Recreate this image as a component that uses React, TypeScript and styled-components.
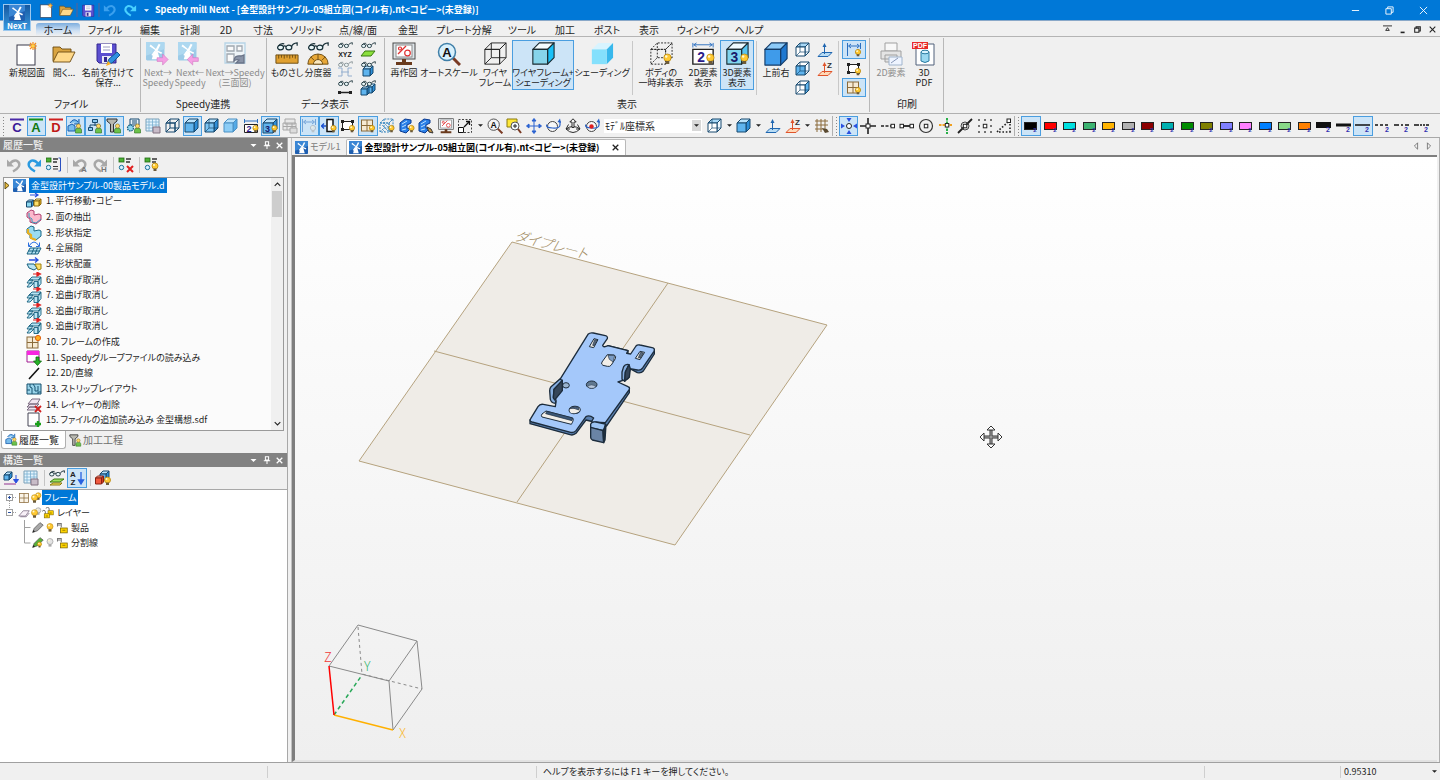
import React, { ReactNode } from "react";
import styled, { createGlobalStyle, css } from "styled-components";

const UI_FONT = `"Noto Sans CJK JP", "Noto Sans", sans-serif`;

const GlobalStyle = createGlobalStyle`
  * { box-sizing: border-box; }
  html, body { margin: 0; padding: 0; }
  body {
    background: #f0f0f0;
    color: #1e1e1e;
    font-family: ${UI_FONT};
    font-size: 10px;
    line-height: 12px;
    font-feature-settings: "palt";
    overflow: hidden;
  }
  button, select, input { font: inherit; color: inherit; font-feature-settings: inherit; }
`;

/* ---------- drawing helpers ---------- */

const NAVY = "#17496e";

type CubeProps = { x?: number; y?: number; w?: number; d?: number; top?: string; front?: string; side?: string; line?: string; dash?: string; wire?: boolean; inner?: boolean; sw?: number };

const Cube = ({ x = 1, y = 1, w = 9, d = 4, top = "#b9e2fb", front = "#5fb4ee", side = "#2f8fd8", line = NAVY, dash, wire, inner, sw = 1 }: CubeProps) => {
  const fy = y + d;
  return (
    <g stroke={line} strokeWidth={sw} strokeDasharray={dash} strokeLinejoin="round" fill="none">
      <path fill={wire ? "none" : top} d={`M${x} ${fy}l${d} ${-d}h${w}l${-d} ${d}z`} />
      <path fill={wire ? "none" : side} d={`M${x + w} ${fy}l${d} ${-d}v${w}l${-d} ${d}z`} />
      <path fill={wire ? "none" : front} d={`M${x} ${fy}h${w}v${w}h${-w}z`} />
      {(wire || inner) && <path strokeWidth={inner ? 0.7 : sw} d={`M${x} ${fy + w}l${d} ${-d}h${w}M${x + d} ${y}v${w}`} />}
    </g>
  );
};

const Bulb = ({ x, y, r = 3, off }: { x: number; y: number; r?: number; off?: boolean }) => (
  <g>
    <circle cx={x} cy={y} r={r} fill={off ? "#e4e4e4" : "#ffc933"} stroke={off ? "#909090" : "#b8860b"} strokeWidth="0.8" />
    <circle cx={x - r / 3} cy={y - r / 3} r={r / 3} fill="#fff8d0" />
    <rect x={x - r / 2} y={y + r - 0.4} width={r} height={r * 0.8} fill={off ? "#aaa" : "#6b5a3a"} />
  </g>
);

const Person = ({ x, y }: { x: number; y: number }) => (
  <g stroke="#2c6e1c" strokeWidth="0.6">
    <path d={`M${x - 3} ${y + 6}v-3q0-2 3-2t3 2v3z`} fill="#6cc24a" />
    <circle cx={x} cy={y - 1} r="2.1" fill="#ffd966" stroke="#8a6a1c" />
  </g>
);

const Glasses = ({ x = 0, y = 0, s = 1, c = "#183038" }: { x?: number; y?: number; s?: number; c?: string }) => (
  <g transform={`translate(${x} ${y}) scale(${s})`} fill="#e8f6f8" stroke={c} strokeWidth="1.3">
    <ellipse cx="4" cy="6" rx="3.2" ry="2.6" />
    <ellipse cx="13" cy="6" rx="3.2" ry="2.6" />
    <path fill="none" d="M7 5q1.5-1.5 3 0M1.5 4.5Q4 1 8 2M16 5Q17 1.5 22 1v3" />
  </g>
);

const Mill = ({ fade }: { fade?: boolean }) => (
  <g>
    <rect width="16" height="16" rx="1" fill={fade ? "#9ccbe8" : "#1f5fb0"} />
    <path d="M0 0h16v6L0 12z" fill={fade ? "#aed8f0" : "#3a86d4"} />
    <path d="M7 8h3l2 7H5z" fill="#fff" />
    <path d="M8 7L3 3.6l1-1.4L8.6 6 11 1.5l1.6.8-2.6 5L14 9l-.8 1.5L8.4 8 6 12l-1.4-.8z" fill="#fff" />
  </g>
);

const Doc = ({ x = 2, y = 2, w = 14, h = 20 }: { x?: number; y?: number; w?: number; h?: number }) => (
  <g>
    <rect x={x} y={y} width={w} height={h} fill="#fff" stroke="#3a3a4a" />
    <path d={`M${x + w - 2} ${y - 3}v8M${x + w - 6} ${y + 1}h8M${x + w - 5} ${y - 2}l6 6M${x + w + 1} ${y - 2}l-6 6`} stroke="#f58a1c" strokeWidth="1.2" />
    <circle cx={x + w - 2} cy={y + 1} r="1.8" fill="#ffd24a" />
  </g>
);

const Folder = () => (
  <g stroke="#6b4a10" strokeWidth="0.9" strokeLinejoin="round">
    <path fill="#d9a441" d="M1 19V5h7l2 2h9v4" />
    <path fill="#ffd98a" d="M1 20l5-10h17l-5 10z" />
  </g>
);

const Disk = () => (
  <g>
    <path d="M1 2h19v19H3l-2-2z" fill="#5b4fd0" stroke="#35298f" />
    <rect x="5" y="2" width="11" height="9" fill="#fff" />
    <path d="M7 5h7M7 8h7" stroke="#9a9ac0" />
    <rect x="6" y="14" width="9" height="7" fill="#e8e8f4" />
    <rect x="8" y="15" width="3" height="5" fill="#35298f" />
  </g>
);

const Curl = ({ c, flip }: { c: string; flip?: boolean }) => (
  <g transform={flip ? "translate(16 0) scale(-1 1)" : undefined}>
    <path d="M4 6.500Q7 2.800 10.500 3.600Q14.500 5.500 12.800 9.500Q11.500 12 7 14.500" fill="none" stroke={c} strokeWidth="2.400" />
    <path d="M1 2.500v7h7z" fill={c} />
  </g>
);

const Monitor = () => (
  <g>
    <rect x="1" y="1" width="22" height="16" fill="#dfe6ea" stroke="#4a4a4a" />
    <rect x="4" y="3" width="16" height="12" fill="#fff" stroke="#888" />
    <g stroke="#e03030" fill="none" strokeWidth="1.200">
      <path d="M6 12L14 4" /><circle cx="8" cy="6.500" r="1.500" /><circle cx="15.500" cy="11" r="2.800" />
    </g>
    <path d="M10 17h4v3h6v3H4v-3h6z" fill="#6a3a1c" />
  </g>
);

const Lens = ({ plain }: { plain?: boolean }) => (
  <g>
    <path d="M16 16l7 7" stroke="#7a3a24" strokeWidth="3" />
    <circle cx="10" cy="10" r="8.500" fill={plain ? "#f4f4f4" : "#d8f0fc"} stroke={plain ? "#555" : "#3f7fa8"} strokeWidth="1.500" />
    <text x="10" y="14.500" textAnchor="middle" fontSize="13" fontWeight="700" fill="#111" fontFamily="Liberation Sans, sans-serif">A</text>
  </g>
);

const Arrow = ({ c, flip }: { c: string; flip?: boolean }) => (
  <path transform={flip ? "translate(34 0) scale(-1 1)" : undefined} d="M12 17h6v-4l6 6-6 6v-4h-6z" fill={c} stroke="#d070c0" strokeWidth="0.600" />
);

const Glyph = ({ t, c, x = 8, y = 13, s = 12 }: { t: string; c: string; x?: number; y?: number; s?: number }) => (
  <text x={x} y={y} fontSize={s} fontWeight="700" textAnchor="middle" fill={c} fontFamily="Liberation Sans, sans-serif">{t}</text>
);

const Grid = ({ x = 2, y = 2, s = 10, c = "#8a6a3a", f = "#f6ead4" }: { x?: number; y?: number; s?: number; c?: string; f?: string }) => (
  <g stroke={c} fill="none">
    <rect x={x} y={y} width={s} height={s} fill={f} />
    <path d={`M${x + s / 2} ${y}v${s}M${x} ${y + s / 2}h${s}`} />
  </g>
);

const Axes = ({ c, z }: { c: string; z?: boolean }) => (
  <g>
    <path d="M1 14.500l4-4h10l-4 4z" fill={z ? "#ffd9b8" : "#b8dcf4"} stroke={c} />
    <path d="M7.500 12V4" stroke={c} />
    <path d="M5.500 5l2-4 2 4z" fill={c} />
    {z && <Glyph t="Z" c="#333" x={12.5} y={7} s={8} />}
  </g>
);

const Dim = ({ c = "#2a6fc0" }: { c?: string }) => (
  <path d="M1.500 1v13M14.500 1v6M3 4h10M5 2L2.500 4 5 6M11 2l2.500 2L11 6" stroke={c} fill="none" />
);

const Nodes = () => (
  <g stroke="#222" fill="#fff"><rect x="2.500" y="3.500" width="10" height="8" />
    {[[2, 3], [12, 3], [2, 11], [12, 11]].map(([a, b]) => <rect key={`${a}-${b}`} x={a - 1} y={b - 1} width="3" height="3" fill="#222" stroke="none" />)}
  </g>
);

const Sq = ({ x, y }: { x: number; y: number }) => <rect x={x - 1.5} y={y - 1.5} width="3.500" height="3.500" fill="#fff" stroke="#222" />;

const Orbit = ({ dot }: { dot?: boolean }) => (
  <g fill="none">
    <circle cx="7.500" cy="8.500" r="5" stroke="#444" fill="#f8f8f8" />
    <path d="M2 6.500q-2 3 5.500 3.500T15 7V3" stroke="#2a62c8" strokeWidth="1.200" />
    <path d="M12.500 4L15 .5l1 4.500z" fill="#2a62c8" />
    {dot && <circle cx="7.500" cy="8.500" r="2.200" fill="#e02020" />}
  </g>
);

const Bars = ({ x = 1, y = 1 }: { x?: number; y?: number }) => (
  <g><rect x={x} y={y} width="5" height="4" fill="#4cb034" stroke="#1f6a12" strokeWidth="0.800" />
    <circle cx={x + 2.5} cy={y + 9.5} r="2.200" fill="#d8f0ff" stroke="#17709a" />
    <path d={`M${x + 7} ${y + 1}h5M${x + 7} ${y + 4}h4`} stroke="#333" strokeWidth="1.300" /></g>
);

const Plates = ({ x = 0, y = 0, c = "#b8e4f4" }: { x?: number; y?: number; c?: string }) => (
  <g transform={`translate(${x} ${y})`} stroke="#17607e" fill={c} strokeWidth="0.900" strokeLinejoin="round">
    <path d="M3 6l3-3h9l-3 3zM1 9l2-3h4l-2 3zM1 13l3-4h4l-4 4zM8 7.500h4v6H8zM12 7.500l3-4v6l-3 4z" />
  </g>
);

const Lock = ({ x, y }: { x: number; y: number }) => (
  <g><path d={`M${x + 1.5} ${y}v-2.500q0-2-2-2t-2 1.500`} fill="none" stroke="#666" strokeWidth="1.200" />
    <rect x={x} y={y} width="7" height="5.500" fill="#ffd400" stroke="#7a6400" strokeWidth="0.800" /><path d={`M${x + 2} ${y + 3}h3`} stroke="#7a6400" /></g>
);

const Pencil = ({ c }: { c: string }) => (
  <g><path d="M2 14l2-5 7-7 4 3-7 7z" fill={c} stroke="#555" strokeWidth="0.900" /><path d="M2 14l1-3 2 2z" fill="#222" /></g>
);

const Zview = () => (
  <g fill="#f4f4f4" stroke="#2a2a2a" strokeWidth="1">
    <path d="M1 11q7-5 14 0q-7 7-14 0z" />
    <path d="M8 .8L4.800 4H7v5.500h2V4h2.200z" />
    <path d="M3.500 6.500L1 11h4M12.500 6.500L15 11h-4" fill="none" />
  </g>
);

/* [view box size, drawing] */
const icons: Record<string, [number, ReactNode]> = {
  newDoc: [24, <><Doc x={2} y={3} w={18} h={20} /></>],
  folder: [24, <Folder />],
  disk: [22, <Disk />],
  saveAs: [24, <><Disk /><path d="M11 22l2-5 8-7 3 3-8 8z" fill="#2f8fe0" stroke="#155a94" /><path d="M10 24l2-5 3 3z" fill="#ffb020" /></>],
  undoT: [16, <Curl c="#3aa0ee" />],
  redoT: [16, <Curl c="#49d1ff" flip />],
  mill: [16, <Mill />],
  nextTo: [26, <><g transform="scale(1.250)"><Mill fade /></g><Arrow c="#f4a0e4" /></>],
  nextFrom: [26, <><g transform="scale(1.250)"><Mill fade /></g><Arrow c="#f4a0e4" flip /></>],
  threeView: [24, <g stroke="#a0a8b0" fill="#fafafa" strokeWidth="1.300"><path d="M2 1h20v20H2z" stroke="#b6d4e6" fill="#eef4f8" /><path d="M4 4h7v5H4zM4 12h7v8H4zM14 4h5v5h-5z" /><path d="M11 19q0-6 7-5l3-1v8h-8l3-3q-3-1-5 1z" fill="#8a94a8" stroke="#6a7488" /></g>],
  ruler: [26, <><Glasses x={2} /><path d="M1 14h24v9H1z" fill="#e0a030" stroke="#6a4a10" /><path d="M4 14v4M7 14v3M10 14v4M13 14v3M16 14v4M19 14v3M22 14v4" stroke="#6a4a10" /></>],
  protractor: [26, <><Glasses x={2} /><path d="M2 24a11 11 0 0 1 22 0z" fill="#e8a838" stroke="#6a4a10" /><path d="M8 24a5 5 0 0 1 10 0zM13 13v6M5 16l4 4M21 16l-4 4" fill="#fbe8c0" stroke="#6a4a10" /></>],
  gXyz: [16, <><Glasses x={1} s={0.65} /><Glyph t="XYZ" c="#222" y={15} s={7} /></>],
  gPlane: [16, <><Glasses x={1} s={0.65} /><path d="M1 14l4-5h10l-4 5z" fill="#8ce03c" stroke="#3a7a12" /></>],
  gDim: [16, <g opacity="0.500"><Glasses x={1} s={0.65} /><path d="M1 7h4v8H1M15 7h-4v8h4M4 11h8" stroke="#3a70b0" fill="none" /></g>],
  gCube: [16, <><Cube x={3} y={5} w={7} d={3} /><Glasses x={1} s={0.65} /></>],
  gLine: [16, <><Glasses x={1} s={0.65} /><path d="M2 12.500h12" stroke="#222" strokeWidth="1.500" /><path d="M1 11h3v3H1zM12 11h3v3h-3z" fill="#222" /></>],
  gCubes: [16, <><Cube x={6} y={4} w={6} d={3} /><Cube x={1} y={7} w={6} d={2} /><Glasses x={1} s={0.65} /></>],
  monitor: [24, <Monitor />],
  lens: [24, <Lens />],
  wireB: [26, <Cube wire x={2} y={1} w={16} d={7} line="#222" />],
  shadeB: [26, <Cube x={2} y={1} w={16} d={7} line="#1a2a30" top="#f4fcff" front="#86d4ea" side="#18c0f8" sw={1.2} />],
  shade: [26, <Cube x={2} y={1} w={16} d={7} line="none" top="#d8f4ff" front="#84e0fc" side="#38b8ec" />],
  hideBody: [26, <><Cube wire x={2} y={1} w={16} d={7} line="#222" dash="2 1.500" /><Bulb x={20} y={17} r={4} /></>],
  two: [26, <><path d="M2 1v5M24 1v5M3 3h20M6 1L3 3l3 2M20 1l3 2-3 2" stroke="#2a6fc0" fill="none" /><path d="M2 8h22v16H2z" fill="#fff" stroke="#222" strokeWidth="1.500" /><Glyph t="2" c="#2a1a8a" x={11} y={22} s={15} /><Bulb x={21} y={17} r={4} /></>],
  three: [26, <><Cube x={2} y={1} w={16} d={7} line="#1a2a30" top="#eefaff" front="#7fd4ee" side="#58c4f0" sw={1.2} /><Glyph t="3" c="#1a1a6a" x={10} y={22} s={15} /><Bulb x={21} y={17} r={4} /></>],
  cubeBig: [26, <Cube x={1} y={1} w={17} d={7} line="#123a66" top="#8ccaf8" front="#3f9bea" side="#1f78d0" sw={1.2} />],
  v1: [16, <Cube inner x={1} y={1} w={9} d={4} top="#a8d8f6" front="#fff" side="#eef8ff" />],
  v2: [16, <Cube inner x={1} y={1} w={9} d={4} top="#fff" front="#5fb4ee" side="#eef8ff" />],
  v3: [16, <Cube inner x={1} y={1} w={9} d={4} top="#fff" front="#fff" side="#5fb4ee" />],
  wire: [16, <Cube wire x={1} y={1} w={9} d={4} />],
  cube: [16, <Cube x={1} y={1} w={9} d={4} />],
  cubeWire: [16, <Cube inner x={1} y={1} w={9} d={4} front="#7cc4f2" />],
  cubePlain: [16, <Cube x={1} y={1} w={9} d={4} line="#4a90c4" front="#8ccdf6" side="#54aae6" />],
  axes: [16, <Axes c="#1f66b0" />],
  axesZ: [16, <Axes c="#e0542a" z />],
  dimBulb: [16, <><Dim /><Bulb x={12} y={10} r={2.6} /></>],
  dimOff: [16, <g opacity="0.550"><Dim /><Bulb x={12} y={10} r={2.6} off /></g>],
  nodesBulb: [16, <><Nodes /><Bulb x={12} y={10} r={2.6} /></>],
  gridBulb: [16, <><Grid x={1.5} y={2} s={11} /><Bulb x={12} y={10} r={2.6} /></>],
  printer: [24, <><g stroke="#a0a0a0" fill="#e4e4e4"><path d="M6 1h12v8H6z" fill="#f8f8f8" /><path d="M2 9h20v8H2zM6 13h12v7H6z" /></g><path d="M10 15h13v8H10z" fill="#eef4ff" stroke="#a0b4cc" /><path d="M12 21l7-5" stroke="#8898b8" /></>],
  pdf: [24, <><path d="M4 2h18v21H4z" fill="#fff" stroke="#50607a" /><path d="M0 0h16v7H0z" fill="#e82a2a" /><Glyph t="PDF" c="#fff" x={8} y={6} s={7} /><path d="M9 10v9q4 3 8 0v-9z" fill="#9ad8f0" stroke="#2a7aa0" /><ellipse cx="13" cy="10" rx="4" ry="1.800" fill="#d8f4ff" stroke="#2a7aa0" /></>],
  C: [16, <><path d="M1 1.500h14" stroke="#4a2aa8" strokeWidth="2" /><Glyph t="C" c="#3a1a98" y={14} s={13} /></>],
  A: [16, <><path d="M1 1.500h14" stroke="#189018" strokeWidth="2" /><Glyph t="A" c="#107a10" y={14} s={13} /></>],
  D: [16, <><path d="M1 1.500h14" stroke="#d02020" strokeWidth="2" /><Glyph t="D" c="#c01818" y={14} s={13} /></>],
  history: [16, <><path d="M1 13V8l4-2 3 2v5zM3 5q4-6 8-1M12 1v5H7" fill="#78bcec" stroke="#1a5fae" /><Person x={11.5} y={9} /></>],
  treeP: [16, <><g stroke={NAVY} fill="#8cc8f0"><path d="M5.500 1.500h5v3h-5zM1.500 9.500h4v3h-4z" /><path d="M8 5v3M3 9V7h10v2" fill="none" /></g><Person x={11.5} y={9} /></>],
  funnelP: [16, <><path d="M1 1h10v2L7.500 6v8h-3V6L1 3z" fill="#b8b8b0" stroke="#333" /><Person x={11.5} y={9} /></>],
  gearP: [16, <><path d="M4 1h9v6H4z" fill="#e8f4fc" stroke={NAVY} /><path d="M6 3h5M6 5h5" stroke={NAVY} /><circle cx="4.500" cy="10" r="3" fill="#8cd4ee" stroke="#1a6080" strokeWidth="1.300" strokeDasharray="1.500 .8" /><Person x={11.5} y={9} /></>],
  sheet: [16, <><path d="M1 1h13v12H1z" fill="#e4f4fd" stroke="#7aa0b8" /><path d="M1 4h13M1 7h13M1 10h13M4 1v12M7.500 1v12M11 1v12" stroke="#7ab0d0" strokeWidth="0.800" /><path d="M8 9h7v6H8z" fill="#c8bcc8" stroke="#807080" /></>],
  two16: [16, <><path d="M1.500 1v4M14.500 1v4M2 3h12" stroke="#2a6fc0" /><path d="M1.500 6.500h13v8h-13z" fill="#fff" stroke="#222" /><Glyph t="2" c="#2a1a8a" x={6} y={14} s={9} /><Bulb x={12.5} y={10} r={2.6} /></>],
  three16: [16, <><Cube x={1} y={1} w={10} d={4} line={NAVY} /><Glyph t="3" c="#1a1a6a" x={5.5} y={14} s={9} /><Bulb x={12.5} y={10} r={2.6} /></>],
  copyGray: [16, <g stroke="#a8a8a8" fill="#e8e8e8"><path d="M3 1h10v5H3zM1 5h13v7H1zM5 5v7M10 5v7M1 8.500h13" /><path d="M8 10h7v5H8z" fill="#ddd" /></g>],
  slide: [16, <><path d="M6 1.500h6v12H6z" fill="#fff" stroke="#111" strokeWidth="1.500" /><path d="M5 8H1M3 5.500L.5 8 3 10.500" stroke="#1a50d0" fill="none" strokeWidth="1.300" /><Bulb x={12.5} y={10} r={2.6} /></>],
  ghostBulb: [16, <><Cube wire x={1} y={1} w={9} d={4} line="#3a88c0" dash="2 1" /><path d="M3 7l6 6M3 11l3 3M6 6l4 4" stroke="#3a88c0" strokeWidth="0.700" /><Bulb x={12.5} y={10} r={2.6} /></>],
  blueBulb: [16, <><path d="M1 5l5-4 6 1v3l-4 2v3l3 1-4 4-6-2z" fill="#2a80e8" stroke="#0a3a90" /><path d="M3 6l5-3M3 9l4-2M3 12l4-1" stroke="#bce0ff" /><Bulb x={12.5} y={10} r={2.6} /></>],
  bluePen: [16, <><path d="M1 5l5-4 6 1v3l-4 2v3l3 1-4 4-6-2z" fill="#2a80e8" stroke="#0a3a90" /><path d="M3 6l5-3M3 9l4-2M3 12l4-1" stroke="#bce0ff" /><path d="M9 9l4 2 2 4-4-1z" fill="#c89a4a" stroke="#333" /></>],
  expand: [16, <><path d="M1.500 1.500h13v13h-13z" fill="none" stroke="#444" strokeDasharray="2 1.500" /><path d="M1.500 9.500h5v5h-5z" fill="#fff" stroke="#111" /><path d="M7 9l5-5M9 3.500h3.500V7" stroke="#111" fill="none" strokeWidth="1.300" /></>],
  lens16: [24, <Lens plain />],
  lensPlus: [16, <><path d="M1 1h10v8H1z" fill="#ffe838" stroke="#8a7a10" /><circle cx="9" cy="8" r="4" fill="#f4faff" stroke="#555" /><path d="M7 8h4M9 6v4" stroke="#222" /><path d="M12 11l3 4" stroke="#7a3a24" strokeWidth="2" /></>],
  move: [16, <g fill="#2a62d0" stroke="#2a62d0"><path d="M8 3v10M3 8h10" /><path d="M8 .5L10 3H6zM8 15.500L10 13H6zM.5 8L3 6v4zM15.500 8L13 6v4z" /></g>],
  orbit: [16, <Orbit />],
  orbitDot: [16, <Orbit dot />],
  zview: [16, <Zview />],
  gridPen: [16, <><path d="M3 1v13M7 1v13M11 1v10M1 3h13M1 7h13M1 11h8" stroke="#8a6a3a" fill="none" /><path d="M8 10l5 1 2 3-4 1z" fill="#5a4a30" /></>],
  sCenter: [16, <g fill="#2a50e0"><circle cx="8" cy="8" r="2.500" fill="#fff" stroke="#222" /><path d="M0 5.500l4 2.500-4 2.500zM16 5.500l-4 2.500 4 2.500zM5.500 0h5L8 4zM5.500 16h5L8 12z" /></g>],
  sCross: [16, <><path d="M8 0v16M0 8h16" stroke="#222" strokeWidth="1.600" /><rect x="6" y="6" width="4" height="4" fill="#fff" stroke="#222" /></>],
  sEnd: [16, <><path d="M1 8h10" stroke="#222" strokeWidth="1.600" strokeDasharray="3 1.500" /><Sq x={12.5} y={7.8} /></>],
  sMid: [16, <><path d="M3 8h11" stroke="#222" strokeWidth="1.800" /><Sq x={2.5} y={7.8} /><Sq x={12.5} y={7.8} /></>],
  sCircle: [16, <><circle cx="8" cy="8" r="6.500" fill="none" stroke="#333" strokeWidth="1.200" /><Sq x={7.8} y={7.8} /></>],
  sPerp: [16, <><path d="M1 7h14" stroke="#f0a020" strokeWidth="2" strokeDasharray="2.500 1" /><path d="M9 0v16" stroke="#28b048" strokeWidth="2" strokeDasharray="2.500 1" /><Sq x={8.8} y={7} /></>],
  sNear: [16, <><path d="M1 15L15 1" stroke="#222" strokeWidth="1.800" /><circle cx="8" cy="8" r="4" fill="none" stroke="#444" /><Sq x={7.8} y={7.8} /></>],
  sGrid: [16, <><path d="M1.200 2h14M1.200 14h14" stroke="#222" strokeWidth="1.600" strokeDasharray="1.600 4.400" /><path d="M2 7.200v1.600M14 7.200v1.600" stroke="#222" strokeWidth="1.600" /><Sq x={7.8} y={7.8} /></>],
  sAngle: [16, <><path d="M1 14L12 4M3 14h12M14 6v8" stroke="#222" strokeWidth="1.600" strokeDasharray="1.600 1.800" fill="none" /><Sq x={12.5} y={2.5} /></>],
  undo: [16, <Curl c="#a8a8a8" />],
  redo: [16, <Curl c="#2a9ae0" flip />],
  undoA: [16, <><Curl c="#a8a8a8" /><Glyph t="A" c="#777" x={12} y={15} s={8} /></>],
  undoH: [16, <><Curl c="#a8a8a8" flip /><Glyph t="H" c="#777" x={12} y={15} s={8} /></>],
  group: [16, <><Bars x={0} /><path d="M7 9.500h5M7 12h5" stroke="#333" /><path d="M12.500 1h2v13h-2" stroke="#2a50c0" fill="none" /></>],
  barsX: [16, <><Bars /><path d="M9 9l6 6M15 9l-6 6" stroke="#e02020" strokeWidth="2" /></>],
  barsBulb: [16, <><Bars /><Bulb x={11} y={9} /></>],
  h1: [16, <><Cube x={0.5} y={7} w={5} d={2} front="#8cd8f0" /><Cube x={8} y={6} w={5} d={2} front="#ffe06a" top="#fff4b8" side="#e8b020" line="#8a6a10" /><path d="M4 2h7M9 0l3 2-3 2" stroke="#2a50e0" fill="none" strokeWidth="1.200" /></>],
  h2: [16, <><path d="M1 4l4-3 3 1v4l5-1 2 1v5l-5 4-6-2v-3L1 8z" fill="#fbb8cc" stroke="#b04070" /><path d="M3 4v4l3 2v3l4 1 5-4" fill="none" stroke="#3a98b8" /></>],
  h3: [16, <><path d="M1 4l4-3 3 1v4l5-1 2 1v5l-5 4-6-2v-3L1 8z" fill="#9adcf2" stroke="#1a6888" /><path d="M2 4v4l3 2v3l5 2" fill="none" stroke="#e8b020" strokeWidth="2.200" /></>],
  h4: [16, <><path d="M1 14l3-6h11l-3 6zM2.500 11h11M8 8l-2.500 6M11.500 8L9 14" stroke="#17607e" fill="#b8e4f4" /><path d="M3 6q5-8 10 0M13.500 2.500V6.500H10M2.500 2.500V6.500H6" fill="none" stroke="#2a70e0" /></>],
  h5: [16, <><path d="M1 8h7l3 4-3 2-5-2z" fill="#b8e4f4" stroke="#17607e" /><path d="M9 8h6v5l-3 1z" fill="#ffe06a" stroke="#a08010" /><path d="M3 4h8M9 1.500L12 4 9 6.500" stroke="#2a50e0" fill="none" strokeWidth="1.300" /></>],
  h6: [16, <><Plates y={2} /><path d="M7 2h6M11 .2L14.500 2 11 4z" stroke="#e02020" fill="#e02020" strokeWidth="1.200" /></>],
  h10: [16, <><Grid x={1} y={3} s={11} /><circle cx="12" cy="4" r="2.600" fill="#ffb020" stroke="#e06010" /></>],
  h11: [16, <><path d="M1 1h12v11H1z" fill="#fff" stroke="#a01a90" /><path d="M1 1h12v4H1z" fill="#f828e0" /><path d="M10 7h3v4h2.500l-4 4.500-4-4.500H10z" fill="#28b028" stroke="#0a6a0a" strokeWidth="0.800" /></>],
  h12: [16, <path d="M3 14L13 3" stroke="#111" strokeWidth="1.600" />],
  h13: [16, <><path d="M1 3h14v10H1z" fill="#9ad4ea" stroke="#17506e" /><path d="M4 3v3l2 1v6M7 3l2 3v4h3V5M1 9h3M12 13v-2h3" fill="none" stroke="#17506e" /></>],
  h14: [16, <><g fill="#f0e4f0" stroke="#7a6a80"><path d="M1 13l3-3h9l-3 3zM1 10l3-3h9l-3 3zM2 7l4-5h8l-3 5z" /></g><path d="M9 9l6 6M15 9l-6 6" stroke="#d02020" strokeWidth="1.800" /></>],
  h15: [16, <><path d="M2 1h11v13H2z" fill="#fff" stroke="#445" /><path d="M12 9v6M9 12h6" stroke="#1aa01a" strokeWidth="2.400" /></>],
  sortDown: [16, <><Cube x={1} y={2} w={5} d={3} /><path d="M1 14h12" stroke="#b070b0" strokeWidth="1.500" /><path d="M13 5v7M10.500 9.500L13 13l2.500-3.500z" stroke="#2a50e0" fill="#2a50e0" /></>],
  glassPlane: [16, <><path d="M1 12l4-3h10l-4 3z" fill="#9ce05c" stroke="#3a7a12" /><path d="M1 15l3-2h9l-2 2z" fill="#ffe86a" stroke="#8a7a10" /><Glasses s={0.7} /></>],
  az: [16, <><Glyph t="A" c="#222" x={4} y={7} s={8} /><Glyph t="Z" c="#222" x={4} y={15} s={8} /><path d="M12 2v11M9.500 10L12 14l2.500-4z" stroke="#2a62e0" fill="#2a62e0" strokeWidth="1.300" /></>],
  cubesBulb: [16, <><Cube x={5} y={1} w={6} d={3} /><Cube x={0.5} y={6} w={6} d={2} top="#ffb0a0" front="#f05a40" side="#d03a20" line="#8a2010" /><Bulb x={12.5} y={10} /></>],
  frame: [16, <Grid x={2} y={2} s={12} f="#faf4e8" />],
  bulbs: [16, <><Bulb x={11} y={4.5} r={3.5} /><Bulb x={6} y={7.5} r={4} /></>],
  bulbsHalf: [16, <><Bulb x={11} y={4.5} r={3.5} off /><Bulb x={6} y={7.5} r={4} /></>],
  layer: [16, <path d="M1 12l6-7h8l-5 7zM3 13h8l4-5" fill="#f8f0f8" stroke="#7a6a80" />],
  locks: [16, <><Lock x={8} y={5} /><Lock x={3} y={9} /></>],
  lock: [16, <><rect x="6" y="8" width="9" height="6.500" fill="#ffd400" stroke="#7a6400" /><path d="M8.500 11h4" stroke="#7a6400" /><path d="M2 6V2h5v5M2 4h4" fill="none" stroke="#777" strokeWidth="1.400" /></>],
  bulb: [16, <Bulb x={8} y={6} r={4} />],
  bulbOff: [16, <Bulb x={8} y={6} r={4} off />],
  pencil: [16, <Pencil c="#a8a8a8" />],
  pencilG: [16, <><Pencil c="#58b038" /><Bulb x={10.5} y={10} r={2.5} /></>],
};

const Icon = ({ name, size = 16 }: { name: string; size?: number }) => {
  const [box, art] = icons[name];
  return <svg width={size} height={size} viewBox={`0 0 ${box} ${box}`} fill="none" aria-hidden="true">{art}</svg>;
};

/* ---------- shell ---------- */

const Window = styled.div`
  display: flex;
  flex-direction: column;
  height: 100vh;
  min-width: 0;
  position: relative;
`;

const bareButton = css`
  display: flex;
  align-items: center;
  justify-content: center;
  padding: 0;
  margin: 0;
  border: 0;
  background: transparent;
`;

const TitleBar = styled.header`
  display: flex;
  align-items: center;
  flex: 0 0 20px;
  padding-left: 36px;
  background: #0078d7;
  color: #fff;
`;

const AppButton = styled.button`
  ${bareButton}
  position: absolute;
  left: 3px;
  top: 4px;
  width: 28px;
  height: 27px;
  flex-direction: column;
  border: 1px solid #9cc8ee;
  background: linear-gradient(#1558a0, #3a9ae0);
  color: #fff;
  font-size: 8px;
  font-weight: 700;
  line-height: 9px;
`;

const QuickButton = styled.button<{ $w?: number }>`
  ${bareButton}
  width: ${p => p.$w ?? 20}px;
  height: 20px;
`;

const QuickDivider = styled.span`
  width: 2px;
  height: 14px;
  background: #2f6cb4;
`;

const AppTitle = styled.h1`
  flex: 1;
  margin: 0 0 0 3px;
  font-size: 9px;
  line-height: 16px;
  font-weight: 700;
  white-space: nowrap;
`;

const CaptionButton = styled.button`
  ${bareButton}
  width: 34px;
  height: 20px;
`;

const TabStrip = styled.nav`
  display: flex;
  flex: 0 0 17px;
  align-items: stretch;
  padding: 2px 0 0 36px;
  border-top: 1px solid #8aa8c8;
  border-bottom: 1px solid #b4b4b4;
`;

const RibbonTab = styled.button<{ $w: number; $on?: boolean }>`
  ${bareButton}
  width: ${p => p.$w}px;
  white-space: nowrap;
  border-radius: 3px 3px 0 0;
  ${p => p.$on && css`background: linear-gradient(#7eaede, #cfe1f4 60%, #f0f0f0);`}
`;

const Filler = styled.div`flex: 1;`;

const MdiButton = styled.button`
  ${bareButton}
  width: 15px;
`;

const Ribbon = styled.div`
  display: flex;
  flex: 0 0 77px;
  border-bottom: 1px solid #b0b0b0;
`;

const Group = styled.section<{ $l: number; $r: number }>`
  display: flex;
  flex-direction: column;
  justify-content: space-between;
  padding: 2px ${p => p.$r}px 2px ${p => p.$l}px;
  margin: 1px 0;
  border-right: 1px solid #b8b8b8;
`;

const GroupBody = styled.div`
  display: flex;
  align-items: flex-start;
`;

const GroupName = styled.h2`
  margin: 0;
  font-size: 10px;
  line-height: 12px;
  font-weight: 400;
  text-align: center;
`;

const onStyle = css`
  border: 1px solid #4a9ee0;
  background: #cce4f7;
`;

const Big = styled.button<{ $w: number; $on?: boolean }>`
  ${bareButton}
  flex-direction: column;
  justify-content: flex-start;
  width: ${p => p.$w}px;
  height: 50px;
  padding-top: 1px;
  border: 1px solid transparent;
  font-size: 9px;
  line-height: 10px;
  ${p => p.$on && onStyle}
  &:disabled { color: #8c8c8c; }
`;

const BigText = styled.span`
  margin-top: 2px;
  white-space: pre;
  text-align: center;
`;

const Stack = styled.div<{ $w: number }>`
  display: flex;
  flex-direction: column;
  width: ${p => p.$w}px;
`;

const Small = styled.button<{ $on?: boolean }>`
  ${bareButton}
  height: 19px;
  border: 1px solid transparent;
  ${p => p.$on && onStyle}
`;

const GroupRule = styled.span`
  width: 1px;
  height: 54px;
  margin: 1px 3px 0 2px;
  background: #c8c8c8;
`;

const ToolRow = styled.div`
  display: flex;
  align-items: center;
  flex: 0 0 24px;
  border-bottom: 1px solid #a8a8a8;
`;

const Run = styled.div<{ $w: number }>`
  display: flex;
  flex: 0 0 ${p => p.$w}px;
`;

const Tool = styled.button<{ $on?: boolean }>`
  ${bareButton}
  flex: 1 1 0;
  min-width: 0;
  height: 20px;
  border: 1px solid transparent;
  ${p => p.$on && onStyle}
`;

const FixedTool = styled(Tool)`
  flex: 0 0 20px;
`;

const CaretButton = styled.button<{ $w?: number }>`
  ${bareButton}
  flex: 0 0 ${p => p.$w ?? 9}px;
  height: 20px;
`;

const Grip = styled.span<{ $first?: boolean }>`
  flex: 0 0 7px;
  height: 20px;
  border-left: ${p => (p.$first ? 0 : 1)}px solid #b0b0b0;
  background: radial-gradient(circle, #888 1px, transparent 1px) 2px 0 / 3px 3px repeat-y;
`;

const ComboBox = styled.div`
  display: flex;
  align-items: center;
  flex: 0 0 98px;
  height: 14px;
  margin: 0 3px 0 2px;
  padding-right: 1px;
  background: #fff;
`;

const Combo = styled.select`
  appearance: none;
  flex: 1;
  min-width: 0;
  height: 14px;
  padding: 0 0 0 1px;
  border: 0;
  background: transparent;
  line-height: 14px;
`;

const ComboArrow = styled.span`
  display: flex;
  align-items: center;
  justify-content: center;
  width: 9px;
  height: 11px;
  background: #d8d8d8;
  pointer-events: none;
`;

const Workspace = styled.main`
  display: flex;
  flex: 1;
  min-height: 0;
`;

const Side = styled.aside`
  display: flex;
  flex-direction: column;
  flex: 0 0 288px;
  border-right: 1px solid #a8a8a8;
`;

const PaneHead = styled.header`
  display: flex;
  align-items: center;
  flex: 0 0 14px;
  padding: 0 1px 0 3px;
  background: #828282;
  color: #f0f0f0;
`;

const PaneTitle = styled.h2`
  flex: 1;
  margin: 0;
  font-size: 10px;
  line-height: 14px;
  font-weight: 500;
`;

const PaneButton = styled.button`
  ${bareButton}
  width: 13px;
  height: 14px;
`;

const PaneTools = styled.div<{ $h: number }>`
  display: flex;
  align-items: center;
  flex: 0 0 ${p => p.$h}px;
  padding-left: ${p => (p.$h > 22 ? 4 : 1)}px;
`;

const PaneRule = styled.span`
  width: 1px;
  height: 16px;
  margin: 0 2px 0 3px;
  background: #c4c4c4;
`;

const HistoryBox = styled.div`
  display: flex;
  flex: 0 0 254px;
  margin: 0 3px 0 3px;
  border: 1px solid #9a9a9a;
  background: #fbfbfb;
`;

const HistoryList = styled.ul`
  display: flex;
  flex-direction: column;
  flex: 1;
  margin: 0;
  padding: 0 0 2px;
  list-style: none;
  overflow: hidden;
`;

const HistoryRow = styled.li<{ $root?: boolean }>`
  display: flex;
  align-items: center;
  flex: 1 1 0;
  gap: ${p => (p.$root ? 3 : 4)}px;
  padding-left: ${p => (p.$root ? 0 : 22)}px;
  min-height: 0;
  font-size: 9px;
  white-space: pre;
`;

const Picked = styled.span`
  padding: 0 2px;
  background: #0078d7;
  color: #fff;
  line-height: 15px;
`;

const ScrollTrack = styled.div`
  display: flex;
  flex-direction: column;
  align-items: center;
  width: 12px;
  background: #f0f0f0;
`;

const ScrollEnd = styled.button`
  ${bareButton}
  width: 12px;
  height: 13px;
`;

const Thumb = styled.span`
  width: 10px;
  height: 26px;
  margin-bottom: auto;
  background: #cdcdcd;
`;

const PaneTabs = styled.div`
  display: flex;
  flex: 0 0 19px;
  margin: 0 0 3px 1px;
`;

const PaneTab = styled.button<{ $on?: boolean }>`
  ${bareButton}
  gap: 1px;
  padding: 0 6px 0 3px;
  height: 18px;
  color: ${p => (p.$on ? "#1e1e1e" : "#6e6e6e")};
  ${p => p.$on && css`
    background: #fff;
    border: 1px solid #b0b0b0;
    border-top: 0;
    border-radius: 0 0 3px 3px;
  `}
`;

const StructTree = styled.ul`
  flex: 1;
  margin: 0;
  padding: 0 0 0 5px;
  list-style: none;
  border-top: 1px solid #a8a8a8;
  background: #fff;
`;

const StructRow = styled.li`
  display: flex;
  align-items: center;
  height: 15px;
  font-size: 9px;
  white-space: nowrap;
`;

const StructLabel = styled.span`
  margin-left: 3px;
`;

const DocArea = styled.section`
  display: flex;
  flex-direction: column;
  flex: 1;
  min-width: 0;
  margin-left: 3px;
  border-left: 1px solid #c0c0c0;
  border-right: 1px solid #b0b0b0;
`;

const DocTabs = styled.div`
  display: flex;
  flex: 0 0 17px;
  padding: 1px 4px 0 1px;
`;

const DocTab = styled.div<{ $on?: boolean }>`
  display: flex;
  align-items: center;
  padding: 0 ${p => (p.$on ? 0 : 6)}px 0 2px;
  color: ${p => (p.$on ? "#000" : "#7c7c7c")};
  font-size: 9px;
  font-weight: ${p => (p.$on ? 700 : 400)};
  white-space: nowrap;
  ${p => p.$on && css`
    background: #fff;
    border: 1px solid #b8b8b8;
    border-bottom: 0;
    border-radius: 2px 2px 0 0;
  `}
`;

const DocTabButton = styled.button`
  ${bareButton}
  gap: 2px;
  color: inherit;
  font-weight: inherit;
`;

const DocClose = styled.button`
  ${bareButton}
  width: 20px;
  height: 14px;
  margin-left: 6px;
`;

const Canvas = styled.div`
  position: relative;
  flex: 1;
  min-height: 0;
  margin-right: 2px;
  border: solid #7e7e7e;
  border-width: 2px 0 0 3px;
  border-bottom: 2px solid #e2e2e2;
  background: linear-gradient(#fff, #efefef);
  overflow: hidden;
`;

const Scene = styled.svg`
  display: block;
  width: 100%;
  height: 100%;
`;

const AxisCube = styled.svg`
  position: absolute;
  left: 25px;
  bottom: 16px;
`;

const StatusBar = styled.footer`
  display: flex;
  align-items: center;
  flex: 0 0 18px;
  border-top: 1px solid #a0a0a0;
  font-size: 9px;
`;

const StatusCell = styled.span<{ $w?: number }>`
  flex: ${p => (p.$w ? `0 0 ${p.$w}px` : "1 1 0")};
  height: 12px;
  padding-left: 6px;
  border-left: 1px solid #cfcfcf;
  white-space: nowrap;
  &:first-child { border-left: 0; }
`;

const StatusEnd = styled(StatusCell)`
  display: flex;
  align-items: center;
  justify-content: space-between;
  padding: 0 3px 0 3px;
`;

const Caret = ({ c = "#222", w = 5 }: { c?: string; w?: number }) => (
  <svg width={w} height="3" viewBox="0 0 6 3" aria-hidden="true"><path d="M0 0h6L3 3z" fill={c} /></svg>
);

const Mark = ({ d, c = "#222", size = 9, sw = 1 }: { d: string; c?: string; size?: number; sw?: number }) => (
  <svg width={size} height={size} viewBox="0 0 10 10" fill="none" stroke={c} strokeWidth={sw} aria-hidden="true"><path d={d} /></svg>
);

const X_MARK = "M1 1l8 8M9 1L1 9";
const RESTORE = "M3 3V1h6v6H7M1 3h6v6H1z";

/* ---------- data ---------- */

const ribbonTabs: [string, number][] = [
  ["ホーム", 44], ["ファイル", 50], ["編集", 40], ["計測", 40], ["2D", 32], ["寸法", 42], ["ソリッド", 44], ["点/線/面", 60],
  ["金型", 40], ["プレート分解", 72], ["ツール", 44], ["加工", 42], ["ポスト", 42], ["表示", 42], ["ウィンドウ", 56], ["ヘルプ", 46],
];

const mainTools: [string, string, boolean?][] = [
  ["C", "C"], ["A", "A", true], ["D", "D"], ["history", "履歴一覧", true], ["treeP", "構造一覧", true], ["funnelP", "加工工程", true],
  ["gearP", "設定"], ["sheet", "シート"], ["wire", "ワイヤフレーム"], ["cube", "ワイヤフレーム+シェーディング", true], ["cubeWire", "隠線"],
  ["cubePlain", "シェーディング"], ["two16", "2D要素表示"], ["three16", "3D要素表示", true], ["copyGray", "複写"], ["dimOff", "寸法表示", true],
  ["slide", "移動", true], ["nodesBulb", "点表示"], ["gridBulb", "フレーム表示", true], ["ghostBulb", "ボディの一時非表示"],
  ["blueBulb", "面表示"], ["bluePen", "面編集"], ["monitor", "再作図"], ["expand", "拡大"],
];

const viewTools: [string, string][] = [["lens16", "オートスケール"], ["lensPlus", "部分拡大"], ["move", "移動"], ["orbit", "回転"], ["zview", "視線"], ["orbitDot", "中心回転"]];

const snapTools: [string, string][] = [["sCenter", "自動"], ["sCross", "交点"], ["sEnd", "端点"], ["sMid", "中点"], ["sCircle", "中心"], ["sPerp", "垂直"], ["sNear", "近接"], ["sGrid", "格子"], ["sAngle", "角度"]];

const swatches = ["#000000", "#ff0000", "#00e0e0", "#3cb371", "#ffb400", "#b0b0b0", "#8b0000", "#00b0b0", "#008c00", "#808000", "#8080ff", "#ff80ff", "#0080ff", "#88d888", "#ff8000"];

const lineStyles: [string, number, string?][] = [["極太線", 6], ["太線", 3], ["細線", 1.5], ["破線", 1.5, "3 2"], ["一点鎖線", 1.5, "5 2 2 2"], ["二点鎖線", 1.5, "5 1 2 1 2 1"]];

const historyItems: [string, string][] = [
  ["h1", "1. 平行移動・コピー"], ["h2", "2. 面の抽出"], ["h3", "3. 形状指定"], ["h4", "4. 全展開"], ["h5", "5. 形状配置"],
  ["h6", "6. 追曲げ取消し"], ["h6", "7. 追曲げ取消し"], ["h6", "8. 追曲げ取消し"], ["h6", "9. 追曲げ取消し"], ["h10", "10. フレームの作成"],
  ["h11", "11. Speedyグループファイルの読み込み"], ["h12", "12. 2D/直線"], ["h13", "13. ストリップレイアウト"], ["h14", "14. レイヤーの削除"],
  ["h15", "15. ファイルの追加読み込み 金型構想.sdf"],
];

const LineIcon = ({ w, dash }: { w: number; dash?: string }) => (
  <svg width="17" height="16" viewBox="0 0 17 16" aria-hidden="true">
    <path d="M1 7h15" stroke="#111" strokeWidth={w} strokeDasharray={dash} />
    <Glyph t="2" c="#3030b0" x={13} y={14} s={7} />
  </svg>
);

const ColorIcon = ({ c }: { c: string }) => (
  <svg width="17" height="16" viewBox="0 0 17 16" aria-hidden="true">
    <rect x="2.500" y="4.500" width="12" height="7" fill={c} stroke="#222" />
    <Glyph t="2" c="#3030b0" x={13} y={14} s={6} />
  </svg>
);

const BigItem = ({ icon, text, w, on, off }: { icon: string; text: string; w: number; on?: boolean; off?: boolean }) => (
  <Big $w={w} $on={on} disabled={off}><Icon name={icon} size={24} /><BigText>{text}</BigText></Big>
);

const SmallItem = ({ icon, label, on }: { icon: string; label: string; on?: boolean }) => (
  <Small aria-label={label} $on={on}><Icon name={icon} /></Small>
);

/* ---------- model view ---------- */

const Model = () => (
  <g transform="translate(204 62) scale(0.33333)" stroke="#1c2c3c" strokeWidth="4" strokeLinejoin="round">
    <g fill="#5a80b0">
      <path d="M90 600L90 611L210 644Q220 647 228 640L258 600L282 606L320 618L388 518L388 502Z" />
      <path d="M390 446L412 458Q424 460 430 453L463 402L463 388Z" />
      <path d="M324 377L384 392L384 402L324 386Z" />
    </g>
    <path
      fill="#a4c8fa"
      d="M264 343Q270 337 280 339L316 347Q324 349 322 356L308 376Q310 384 324 377L384 392L380 400L392 402L408 378Q412 373 420 375L456 383Q466 385 462 394L428 444Q422 452 412 450L390 446L384 476L354 486L384 500Q391 503 387 510L316 608L274 606L281 594Q268 584 258 590L228 632Q222 639 212 637L96 606Q87 603 92 596L114 560Q120 551 130 553L166 560L168 545L152 505L180 478Z"
    />
    <g fill="#f1eee8" strokeWidth="3">
      <path d="M282 356l12 3-13 24-13-3z" />
      <path d="M420 394l14 3-14 22-14-4z" />
      <path d="M138 573L218 594Q223 599 214 613L126 591Q122 588 126 582Z" />
      <path d="M322 404L342 405Q350 408 346 416L334 435Q330 441 322 439L309 436Q302 433 306 426Z" />
      <ellipse cx="224" cy="570" rx="17" ry="11" transform="rotate(-8 224 570)" />
    </g>
    <g strokeWidth="2">
      <path d="M284 359l7 2-8 16-5-1z" fill="#5c6c80" />
      <path d="M422 397l8 2-9 15-6-1z" fill="#5c6c80" />
      <path d="M140 574L218 594L216 602L137 581Z" fill="#3c5878" />
      <path d="M324 406h20l-4 20-12-8z" fill="#7c9cc4" />
      <path d="M208 566q8-9 28-4v8q-14-8-28-4z" fill="#4c6484" />
    </g>
    <ellipse cx="275" cy="494" rx="16" ry="11" fill="#60788f" strokeWidth="3" />
    <path d="M262 500q12-10 26 0q-12 10-26 0z" fill="#b8c8dc" strokeWidth="1" />
    <ellipse cx="198" cy="496" rx="10" ry="8" fill="#9ab4d0" strokeWidth="3" />
    <path fill="#86aee0" d="M180 477L153 500Q149 504 149 512L151 538Q154 549 166 550L168 540L160 532L162 508L187 482Z" />
    <path fill="#35465a" d="M187 481L187 512Q184 516 164 540L160 534L162 508Z" />
    <path fill="#86aee0" d="M387 434Q376 431 371 440L366 456L366 478L374 484L376 456Z" />
    <path fill="#35465a" d="M387 434L391 446L388 472L374 484L376 456Z" />
    <path fill="#9cc4f4" d="M272 612Q276 604 288 606L316 612L313 632L272 624Z" />
    <path fill="#6a84a6" d="M272 622L309 632L311 668L277 660Q272 658 272 652Z" />
    <path fill="#22303e" d="M309 632L318 614L315 660L311 668Z" />
  </g>
);

const ModelView = () => (
  <Scene role="img" aria-label="モデル">
    <g transform="translate(1 1)">
      <g fill="none" stroke="#b5a27e" strokeWidth="1">
        <path d="M216 84L531 167 379 387 63 303z" fill="#efece7" />
        <path d="M372 125L221 344M138 193l316 84" />
      </g>
      <text transform="translate(218 82) rotate(15)" fontSize="14" fontWeight="300" fontStyle="italic" fontFamily="Noto Sans CJK JP, sans-serif" fill="#a08a60">ダイプレート</text>
      <Model />
      <g transform="translate(683 267)" fill="#fff" stroke="#333" strokeWidth="1">
        <path d="M12 5v14M5 12h14" strokeWidth="3" />
        <path d="M12 5v14M5 12h14" stroke="#bbb" />
        <path d="M12 1l4 4H8zM12 23l4-4H8zM1 12l4-4v8zM23 12l-4-4v8z" />
      </g>
    </g>
  </Scene>
);

const Orientation = () => (
  <AxisCube width="120" height="124" viewBox="320 620 120 124" fill="none" aria-hidden="true">
    <g stroke="#8a8a8a">
      <path d="M358 625l59 16-28 40-60-15zM417 641l5 48-29 41-4-49" />
      <path d="M358 627l4 47 60 15" strokeDasharray="3 3" />
    </g>
    <path d="M334 715l28-40" stroke="#28a858" strokeWidth="1.500" strokeDasharray="4 3" />
    <path d="M334 715l59 15" stroke="#ffb000" strokeWidth="1.500" />
    <path d="M329 666l5 49" stroke="#ff0000" strokeWidth="1.500" />
    <g fontFamily="Noto Sans CJK JP, sans-serif" fontWeight="300" fontSize="13">
      <text x="324" y="662" fill="#f03838">Z</text>
      <text x="364" y="671" fill="#38b870">Y</text>
      <text x="399" y="738" fill="#f8b830">X</text>
    </g>
  </AxisCube>
);

const PaneHeader = ({ title }: { title: string }) => (
  <PaneHead>
    <PaneTitle>{title}</PaneTitle>
    <PaneButton aria-label="メニュー"><Caret c="#fff" w={7} /></PaneButton>
    <PaneButton aria-label="固定"><Mark c="#fff" size={8} sw={1.3} d="M3 1h4v4H3zM1 6h8M5 6v4" /></PaneButton>
    <PaneButton aria-label="閉じる"><Mark c="#fff" size={7} sw={1.8} d={X_MARK} /></PaneButton>
  </PaneHead>
);

const Expander = ({ open, last }: { open?: boolean; last?: boolean }) => (
  <svg width="13" height="15" viewBox="0 0 13 15" fill="none" stroke="#a0a0a0" aria-hidden="true">
    <path d={last ? "M4.500 0v4M8 7.500h4" : "M4.500 11v4M8 7.500h4"} strokeDasharray="1 1" />
    <rect x="1.500" y="4.500" width="6" height="6" fill="#fff" />
    <path d={open ? "M3 7.500h3" : "M3 7.500h3M4.500 6v3"} stroke="#2a50a0" />
  </svg>
);

const Branch = ({ last }: { last?: boolean }) => (
  <svg width="26" height="15" viewBox="0 0 26 15" fill="none" stroke="#a0a0a0" aria-hidden="true">
    <path d={last ? "M19.500 0v8h6" : "M19.500 0v15M19.500 7.500h6"} />
  </svg>
);

export default function App() {
  return (
    <Window>
      <GlobalStyle />
      <TitleBar>
        <QuickButton aria-label="新規図面"><Icon name="newDoc" size={15} /></QuickButton>
        <QuickButton aria-label="開く"><Icon name="folder" size={15} /></QuickButton>
        <QuickDivider />
        <QuickButton aria-label="保存"><Icon name="disk" size={13} /></QuickButton>
        <QuickDivider />
        <QuickButton aria-label="元に戻す"><Icon name="undoT" size={14} /></QuickButton>
        <QuickButton aria-label="やり直す"><Icon name="redoT" size={14} /></QuickButton>
        <QuickButton $w={12} aria-label="カスタマイズ"><Caret c="#fff" w={5} /></QuickButton>
        <AppTitle>Speedy mill Next - [金型設計サンプル-05組立図(コイル有).nt&lt;コピー&gt;(未登録)]</AppTitle>
        <CaptionButton aria-label="最小化"><Mark c="#fff" d="M1 5h8" /></CaptionButton>
        <CaptionButton aria-label="元のサイズ"><Mark c="#fff" d={RESTORE} /></CaptionButton>
        <CaptionButton aria-label="閉じる"><Mark c="#fff" d={X_MARK} /></CaptionButton>
      </TitleBar>
      <TabStrip>
        {ribbonTabs.map(([t, w], i) => <RibbonTab key={t} $w={w} $on={i === 0}>{t}</RibbonTab>)}
        <Filler />
        <MdiButton aria-label="リボンを折りたたむ"><Mark d="M0 1h10M5 3L3 6h4z" size={9} /></MdiButton>
        <MdiButton aria-label="最小化"><Mark d="M2 8h5" sw={2} size={8} /></MdiButton>
        <MdiButton aria-label="元のサイズ"><Mark d={RESTORE} sw={1.5} size={7} /></MdiButton>
        <MdiButton aria-label="閉じる"><Mark d={X_MARK} sw={1.5} size={7} /></MdiButton>
      </TabStrip>
      <AppButton aria-label="アプリケーションメニュー"><Icon name="mill" size={16} />NexT</AppButton>

      <Ribbon>
        <Group $l={5} $r={3}>
          <GroupBody>
            <BigItem icon="newDoc" text="新規図面" w={44} />
            <BigItem icon="folder" text="開く..." w={30} />
            <BigItem icon="saveAs" text={"名前を付けて\n保存..."} w={58} />
          </GroupBody>
          <GroupName>ファイル</GroupName>
        </Group>
        <Group $l={1} $r={2}>
          <GroupBody>
            <BigItem icon="nextTo" text={"Next→\nSpeedy"} w={32} off />
            <BigItem icon="nextFrom" text={"Next←\nSpeedy"} w={32} off />
            <BigItem icon="threeView" text={"Next→Speedy\n(三面図)"} w={58} off />
          </GroupBody>
          <GroupName>Speedy連携</GroupName>
        </Group>
        <Group $l={4} $r={5}>
          <GroupBody>
            <BigItem icon="ruler" text="ものさし" w={32} />
            <BigItem icon="protractor" text="分度器" w={30} />
            <Stack $w={24}>
              <SmallItem icon="gXyz" label="座標" />
              <SmallItem icon="gDim" label="距離" />
              <SmallItem icon="gLine" label="線分" />
            </Stack>
            <Stack $w={22}>
              <SmallItem icon="gPlane" label="面" />
              <SmallItem icon="gCube" label="ボディ" />
              <SmallItem icon="gCubes" label="複数ボディ" />
            </Stack>
          </GroupBody>
          <GroupName>データ表示</GroupName>
        </Group>
        <Group $l={3} $r={3}>
          <GroupBody>
            <BigItem icon="monitor" text="再作図" w={32} />
            <BigItem icon="lens" text="オートスケール" w={58} />
            <BigItem icon="wireB" text={"ワイヤ\nフレーム"} w={34} />
            <BigItem icon="shadeB" text={"ワイヤフレーム+\nシェーディング"} w={62} on />
            <BigItem icon="shade" text="シェーディング" w={56} />
            <GroupRule />
            <BigItem icon="hideBody" text={"ボディの\n一時非表示"} w={50} />
            <BigItem icon="two" text={"2D要素\n表示"} w={34} />
            <BigItem icon="three" text={"3D要素\n表示"} w={34} on />
            <GroupRule />
            <BigItem icon="cubeBig" text="上前右" w={32} />
            <Stack $w={22}>
              <SmallItem icon="v1" label="上面" />
              <SmallItem icon="v2" label="前面" />
              <SmallItem icon="v3" label="右面" />
            </Stack>
            <Stack $w={22}>
              <SmallItem icon="axes" label="作業平面" />
              <SmallItem icon="axesZ" label="Z方向" />
            </Stack>
            <GroupRule />
            <Stack $w={24}>
              <SmallItem icon="dimBulb" label="寸法表示" on />
              <SmallItem icon="nodesBulb" label="点表示" />
              <SmallItem icon="gridBulb" label="フレーム表示" on />
            </Stack>
          </GroupBody>
          <GroupName>表示</GroupName>
        </Group>
        <Group $l={4} $r={3}>
          <GroupBody>
            <BigItem icon="printer" text="2D要素" w={34} off />
            <BigItem icon="pdf" text={"3D\nPDF"} w={32} />
          </GroupBody>
          <GroupName>印刷</GroupName>
        </Group>
      </Ribbon>

      <ToolRow>
        <Grip $first />
        <Run $w={468}>
          {mainTools.map(([ic, label, on]) => <Tool key={ic} aria-label={label} $on={on}><Icon name={ic} /></Tool>)}
        </Run>
        <CaretButton $w={10} aria-label="拡大の種類"><Caret /></CaretButton>
        <Run $w={117}>
          {viewTools.map(([ic, label]) => <Tool key={ic} aria-label={label}><Icon name={ic} /></Tool>)}
        </Run>
        <ComboBox>
          <Combo aria-label="座標系"><option>ﾓﾃﾞﾙ座標系</option></Combo>
          <ComboArrow><Caret /></ComboArrow>
        </ComboBox>
        <FixedTool aria-label="上面"><Icon name="v1" /></FixedTool>
        <CaretButton aria-label="上面の種類"><Caret /></CaretButton>
        <FixedTool aria-label="立体"><Icon name="cube" /></FixedTool>
        <CaretButton aria-label="立体の種類"><Caret /></CaretButton>
        <FixedTool aria-label="作業平面"><Icon name="axes" /></FixedTool>
        <FixedTool aria-label="Z方向"><Icon name="axesZ" /></FixedTool>
        <CaretButton aria-label="Z方向の種類"><Caret /></CaretButton>
        <FixedTool aria-label="グリッド"><Icon name="gridPen" /></FixedTool>
        <Grip />
        <Run $w={175}>
          {snapTools.map(([ic, label], i) => <Tool key={ic} aria-label={label} $on={i === 0}><Icon name={ic} /></Tool>)}
        </Run>
        <Grip />
        <Run $w={410}>
          {swatches.map((c, i) => <Tool key={c} aria-label={`色 ${i + 1}`} $on={i === 0}><ColorIcon c={c} /></Tool>)}
          {lineStyles.map(([label, w, dash], i) => <Tool key={label} aria-label={label} $on={i === 2}><LineIcon w={w} dash={dash} /></Tool>)}
        </Run>
      </ToolRow>

      <Workspace>
        <Side>
          <PaneHeader title="履歴一覧" />
          <PaneTools $h={25}>
            <FixedTool aria-label="元に戻す"><Icon name="undo" /></FixedTool>
            <FixedTool aria-label="やり直す"><Icon name="redo" /></FixedTool>
            <FixedTool aria-label="グループ"><Icon name="group" /></FixedTool>
            <PaneRule />
            <FixedTool aria-label="すべて戻す"><Icon name="undoA" /></FixedTool>
            <FixedTool aria-label="履歴を戻す"><Icon name="undoH" /></FixedTool>
            <PaneRule />
            <FixedTool aria-label="削除"><Icon name="barsX" /></FixedTool>
            <PaneRule />
            <FixedTool aria-label="表示切替"><Icon name="barsBulb" /></FixedTool>
          </PaneTools>
          <HistoryBox>
            <HistoryList>
              <HistoryRow $root>
                <svg width="6" height="9" viewBox="0 0 6 9" aria-hidden="true"><path d="M1 1l4 3.500L1 8z" fill="#f0c040" stroke="#5a4a10" /></svg>
                <Icon name="mill" size={13} />
                <Picked>金型設計サンプル-00製品モデル.d</Picked>
              </HistoryRow>
              {historyItems.map(([ic, t]) => <HistoryRow key={t}><Icon name={ic} /><span>{t}</span></HistoryRow>)}
            </HistoryList>
            <ScrollTrack>
              <ScrollEnd aria-label="上へ"><Mark size={7} sw={1.5} d="M1 7l4-4 4 4" /></ScrollEnd>
              <Thumb />
              <ScrollEnd aria-label="下へ"><Mark size={7} sw={1.5} d="M1 3l4 4 4-4" /></ScrollEnd>
            </ScrollTrack>
          </HistoryBox>
          <PaneTabs>
            <PaneTab $on><Icon name="history" size={13} />履歴一覧</PaneTab>
            <PaneTab><Icon name="funnelP" size={13} />加工工程</PaneTab>
          </PaneTabs>
          <PaneHeader title="構造一覧" />
          <PaneTools $h={22}>
            <FixedTool aria-label="並べ替え"><Icon name="sortDown" /></FixedTool>
            <FixedTool aria-label="シート"><Icon name="sheet" /></FixedTool>
            <PaneRule />
            <FixedTool aria-label="レイヤー表示"><Icon name="glassPlane" /></FixedTool>
            <FixedTool aria-label="名前順" $on><Icon name="az" /></FixedTool>
            <PaneRule />
            <FixedTool aria-label="ボディ表示"><Icon name="cubesBulb" /></FixedTool>
          </PaneTools>
          <StructTree>
            <StructRow><Expander /><Icon name="frame" size={12} /><Icon name="bulbs" size={12} /><Picked>フレーム</Picked></StructRow>
            <StructRow><Expander open last /><Icon name="layer" size={12} /><Icon name="bulbsHalf" size={12} /><Icon name="locks" size={12} /><StructLabel>レイヤー</StructLabel></StructRow>
            <StructRow><Branch /><Icon name="pencil" size={13} /><Icon name="bulb" size={12} /><Icon name="lock" size={12} /><StructLabel>製品</StructLabel></StructRow>
            <StructRow><Branch last /><Icon name="pencilG" size={13} /><Icon name="bulbOff" size={12} /><Icon name="lock" size={12} /><StructLabel>分割線</StructLabel></StructRow>
          </StructTree>
        </Side>
        <DocArea>
          <DocTabs>
            <DocTab><DocTabButton><Icon name="mill" size={13} />モデル1</DocTabButton></DocTab>
            <DocTab $on>
              <DocTabButton><Icon name="mill" size={13} />金型設計サンプル-05組立図(コイル有).nt&lt;コピー&gt;(未登録)</DocTabButton>
              <DocClose aria-label="タブを閉じる"><Mark size={7} sw={1.8} d={X_MARK} /></DocClose>
            </DocTab>
            <Filler />
            <PaneButton aria-label="前のタブ"><Mark size={8} c="#666" d="M7 1v8L3 5z" /></PaneButton>
            <PaneButton aria-label="次のタブ"><Mark size={8} c="#666" d="M3 1v8l4-4z" /></PaneButton>
          </DocTabs>
          <Canvas>
            <ModelView />
            <Orientation />
          </Canvas>
        </DocArea>
      </Workspace>

      <StatusBar>
        <StatusCell $w={267} />
        <StatusCell $w={269} />
        <StatusCell>ヘルプを表示するには F1 キーを押してください。</StatusCell>
        <StatusCell $w={136} />
        <StatusEnd $w={100}>0.95310<Caret /></StatusEnd>
      </StatusBar>
    </Window>
  );
}
